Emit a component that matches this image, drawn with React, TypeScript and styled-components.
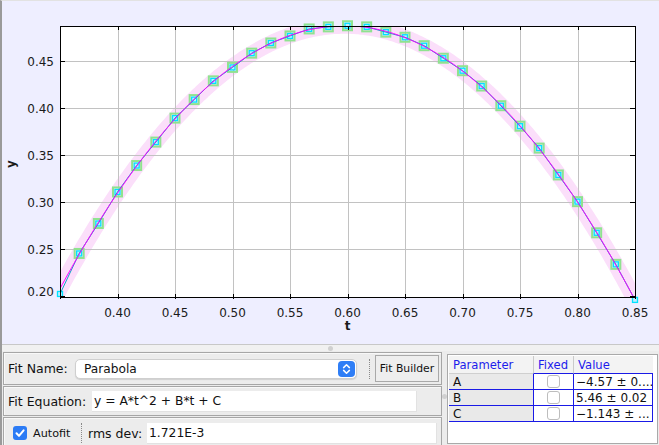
import styled, { createGlobalStyle } from "styled-components";

const GlobalStyle = createGlobalStyle`
  html, body {
    margin: 0;
    padding: 0;
    background: #ececec;
  }
  body {
    font-family: "DejaVu Sans", "Liberation Sans", sans-serif;
    color: #111;
  }
`;

// chart mapping (page coordinates)
const X = (t: number) => 60 + (t - 0.35) * 1150;
const Y = (v: number) => 296.3 - (v - 0.2) * 940;
const fit = (t: number) => -4.57 * t * t + 5.46 * t - 1.143;

const noise = [
  -0.0057, 0.001, -0.001, 0.0012, 0.0005, -0.0008, 0.001, -0.0005, 0.0008,
  -0.001, 0.0006, 0.0004, -0.0006, 0.0009, -0.0003, 0.0, 0.0005, -0.0009,
  0.0004, 0.0007, -0.0008, 0.0003, 0.0009, -0.0006, -0.0004, 0.0008, -0.0007,
  0.0005, -0.0005, 0.0006, 0.0,
];

const points = noise.map((n, i) => {
  const t = 0.35 + i / 60;
  return { x: X(t), y: Y(fit(t) + n), ring: i > 0 && i < noise.length - 1 };
});

const fitPath = (() => {
  let d = "";
  for (let t = 0.33; t <= 0.871; t += 0.002) {
    d += (d ? " L" : "M") + X(t).toFixed(1) + " " + Y(fit(t)).toFixed(1);
  }
  return d;
})();

const dataPath = points
  .map((p, i) => (i ? "L" : "M") + p.x.toFixed(1) + " " + p.y.toFixed(1))
  .join(" ");

const xTicks = [0.35, 0.4, 0.45, 0.5, 0.55, 0.6, 0.65, 0.7, 0.75, 0.8, 0.85];
const yTicks = [0.2, 0.25, 0.3, 0.35, 0.4, 0.45];
const px = (n: number) => Math.round(n) + 0.5;

const params = [
  { name: "A", value: "−4.57 ± 0...." },
  { name: "B", value: "5.46 ± 0.02" },
  { name: "C", value: "−1.143 ± ..." },
];

const Chart = () => (
  <svg width={657} height={343} viewBox="2 1 657 343">
    <defs>
      <clipPath id="frame">
        <rect x={60.5} y={26.5} width={575} height={271} />
      </clipPath>
    </defs>
    <rect x={60.5} y={26.5} width={575} height={271} fill="#fff" />
    <g clipPath="url(#frame)">
      <path d={fitPath} fill="none" stroke="#fbdffa" strokeWidth={16} />
      {xTicks.slice(1, -1).map((t) => (
        <line key={t} x1={px(X(t))} x2={px(X(t))} y1={26} y2={297} stroke="#c2c2c2" />
      ))}
      {yTicks.slice(1).map((v) => (
        <line key={v} x1={60} x2={635} y1={px(Y(v))} y2={px(Y(v))} stroke="#c2c2c2" />
      ))}
    </g>
    {points.map((p, i) => (
      <g key={i}>
        {p.ring && (
          <rect x={p.x - 4.5} y={p.y - 4.5} width={9} height={9} fill="none" stroke="#8fe38f" strokeWidth={2} />
        )}
        <rect x={p.x - 2.5} y={p.y - 2.5} width={5} height={5} fill="#bfeeff" stroke="#00e2ff" strokeWidth={1.3} />
      </g>
    ))}
    <g clipPath="url(#frame)">
      <path d={dataPath} fill="none" stroke="#12a0c8" strokeWidth={1} />
      <path d={fitPath} fill="none" stroke="#ff00ff" strokeWidth={1} />
    </g>
    <rect x={60.5} y={26.5} width={575} height={271} fill="none" stroke="#000" />
    <g stroke="#000">
      {yTicks.map((v) => (
        <g key={v}>
          <line x1={60} x2={65} y1={px(Y(v))} y2={px(Y(v))} />
          <line x1={630} x2={635} y1={px(Y(v))} y2={px(Y(v))} />
        </g>
      ))}
      {xTicks.map((t) => (
        <g key={t}>
          <line x1={px(X(t))} x2={px(X(t))} y1={26} y2={30} />
          <line x1={px(X(t))} x2={px(X(t))} y1={294} y2={299} />
        </g>
      ))}
    </g>
    <g fontFamily="DejaVu Sans, sans-serif" fontSize={12} fill="#1a1a1a">
      {yTicks.map((v) => (
        <text key={v} x={54} y={(v === 0.2 ? 291.5 : Y(v)) + 4.4} textAnchor="end">
          {v.toFixed(2)}
        </text>
      ))}
      {xTicks.slice(1).map((t) => (
        <text key={t} x={X(t)} y={316.5} textAnchor="middle">
          {t.toFixed(2)}
        </text>
      ))}
      <text x={347.5} y={330} textAnchor="middle" fontWeight="bold">
        t
      </text>
      <text transform="translate(15 164) rotate(-90)" textAnchor="middle" fontWeight="bold">
        y
      </text>
    </g>
  </svg>
);

export default function App() {
  return (
    <>
      <GlobalStyle />
      <Window>
        <PlotPanel>
          <Chart />
        </PlotPanel>
        <HSplit>
          <Grip />
        </HSplit>
        <Bottom>
          <FitColumn>
            <Row $h={33}>
              <Label $w={67}>Fit Name:</Label>
              <Combo>
                <span>Parabola</span>
                <svg width={17} height={16} viewBox="0 0 17 16">
                  <rect width={17} height={16} rx={4} fill="#2f7ef6" />
                  <path
                    d="M5.6 6.6 L8.5 3.8 L11.4 6.6 M5.6 9.4 L8.5 12.2 L11.4 9.4"
                    fill="none"
                    stroke="#fff"
                    strokeWidth={1.5}
                    strokeLinecap="round"
                    strokeLinejoin="round"
                  />
                </svg>
              </Combo>
              <DotSep $ml={12} />
              <Button>Fit Builder</Button>
            </Row>
            <Row $h={30}>
              <Label $w={84}>Fit Equation:</Label>
              <Field $w={325}>y = A*t^2 + B*t + C</Field>
            </Row>
            <Row $h={32}>
              <Check>
                <svg width={14} height={14} viewBox="0 0 14 14">
                  <rect width={14} height={14} rx={3} fill="#2b7bf5" />
                  <path
                    d="M3.5 7.3 L6 9.9 L10.6 4.3"
                    fill="none"
                    stroke="#fff"
                    strokeWidth={2}
                    strokeLinecap="round"
                    strokeLinejoin="round"
                  />
                </svg>
              </Check>
              <SmallLabel $w={48}>Autofit</SmallLabel>
              <DotSep $ml={0} />
              <Label $w={59} style={{ marginLeft: 6 }}>
                rms dev:
              </Label>
              <Field $w={290}>1.721E-3</Field>
            </Row>
          </FitColumn>
          <VSplit>
            <Grip />
          </VSplit>
          <TablePanel>
            <Table>
              <Head $first>Parameter</Head>
              <Head>Fixed</Head>
              <Head>Value</Head>
              {params.map((p) => (
                <Cells key={p.name} p={p} />
              ))}
            </Table>
          </TablePanel>
        </Bottom>
      </Window>
    </>
  );
}

const Cells = ({ p }: { p: { name: string; value: string } }) => (
  <>
    <NameCell>{p.name}</NameCell>
    <FixedCell>
      <EmptyBox />
    </FixedCell>
    <ValueCell>{p.value}</ValueCell>
  </>
);

const Window = styled.div`
  width: 659px;
  height: 445px;
  overflow: hidden;
  box-sizing: border-box;
  display: flex;
  flex-direction: column;
  border-left: 2px solid #9a9a9a;
  border-top: 1px solid #e2e2e2;
  background: #ececec;
`;

const PlotPanel = styled.div`
  flex: none;
  height: 343px;
  background: #eeeeff;
  svg {
    display: block;
  }
`;

const HSplit = styled.div`
  flex: none;
  height: 6px;
  border-top: 1px solid #c8c8c8;
  background: #f1f1f1;
  display: flex;
  justify-content: center;
  align-items: center;
`;

const Grip = styled.div`
  width: 5px;
  height: 5px;
  border-radius: 50%;
  background: #d0d0d0;
`;

const Bottom = styled.div`
  flex: none;
  height: 94px;
  display: flex;
  overflow: hidden;
`;

const FitColumn = styled.div`
  width: 440px;
  padding: 1px 0 0 1px;
  box-sizing: border-box;
  display: flex;
  flex-direction: column;
  gap: 1px;
  flex: none;
`;

const Row = styled.div<{ $h: number }>`
  flex: none;
  height: ${({ $h }) => $h}px;
  box-sizing: border-box;
  border: 1px solid #a6a6a6;
  box-shadow: inset 1px 1px 0 #f8f8f8;
  display: flex;
  align-items: center;
  padding-left: 4px;
  background: #ececec;
`;

const Label = styled.div<{ $w: number }>`
  width: ${({ $w }) => $w}px;
  flex: none;
  font-size: 12.5px;
  white-space: nowrap;
`;

const SmallLabel = styled(Label)`
  font-size: 11.2px;
`;

const Combo = styled.div`
  width: 282px;
  height: 20px;
  box-sizing: border-box;
  border: 1px solid #cfcfcf;
  border-radius: 5px;
  background: #fff;
  box-shadow: 0 1px 1px rgba(0, 0, 0, 0.12);
  display: flex;
  align-items: center;
  justify-content: space-between;
  padding: 0 1px 0 8px;
  font-size: 12.2px;
  svg {
    display: block;
  }
`;

const DotSep = styled.div<{ $ml: number }>`
  flex: none;
  margin-left: ${({ $ml }) => $ml}px;
  height: 20px;
  border-left: 1px dotted #8a8a8a;
`;

const Button = styled.div`
  margin-left: 5px;
  width: 64px;
  height: 27px;
  box-sizing: border-box;
  border: 1px solid #a9a9a9;
  background: #eeeeee;
  display: flex;
  align-items: center;
  justify-content: center;
  font-size: 10.8px;
  white-space: nowrap;
`;

const Field = styled.div<{ $w: number }>`
  width: ${({ $w }) => $w}px;
  height: 21px;
  box-sizing: border-box;
  background: #fff;
  border-bottom: 1px solid #e2e2e2;
  border-right: 1px solid #e2e2e2;
  display: flex;
  align-items: center;
  padding-left: 2px;
  font-size: 12.3px;
  white-space: nowrap;
`;

const Check = styled.div`
  margin-left: 5px;
  width: 14px;
  height: 14px;
  margin-right: 6px;
  svg {
    display: block;
  }
`;

const VSplit = styled.div`
  width: 5px;
  flex: none;
  display: flex;
  align-items: center;
  justify-content: center;
  padding-bottom: 4px;
  box-sizing: border-box;
`;

const TablePanel = styled.div`
  margin-top: 3px;
  width: 211px;
  height: 90px;
  box-sizing: border-box;
  border: 1px solid #a9a9a9;
  background: #fff;
  padding: 1px;
  flex: none;
`;

const Table = styled.div`
  display: grid;
  grid-template-columns: 84px 40px 80px;
  grid-auto-rows: 16px;
  grid-template-rows: 18px;
  font-size: 12px;
`;

const Head = styled.div<{ $first?: boolean }>`
  background: #f3f3f3;
  color: #1c1cec;
  font-size: 11.6px;
  padding-left: 4px;
  box-sizing: border-box;
  border-left: ${({ $first }) => ($first ? "none" : "1px solid #cacaca")};
  border-bottom: 1px solid ${({ $first }) => ($first ? "#cfcfcf" : "#1a1ae6")};
  display: flex;
  align-items: center;
  white-space: nowrap;
`;

const NameCell = styled.div`
  background: #e9e9e9;
  border-bottom: 1px solid #1a1ae6;
  padding-left: 4px;
  box-sizing: border-box;
  display: flex;
  align-items: center;
`;

const FixedCell = styled.div`
  border-left: 1px solid #1a1ae6;
  border-bottom: 1px solid #1a1ae6;
  box-sizing: border-box;
  display: flex;
  align-items: center;
  justify-content: center;
`;

const EmptyBox = styled.div`
  width: 13px;
  height: 13px;
  box-sizing: border-box;
  border: 1px solid #bdbdbd;
  border-radius: 3px;
  background: #fff;
`;

const ValueCell = styled.div`
  border-left: 1px solid #1a1ae6;
  border-right: 1px solid #1a1ae6;
  border-bottom: 1px solid #1a1ae6;
  box-sizing: border-box;
  padding-left: 2px;
  display: flex;
  align-items: center;
  white-space: nowrap;
  overflow: hidden;
`;
